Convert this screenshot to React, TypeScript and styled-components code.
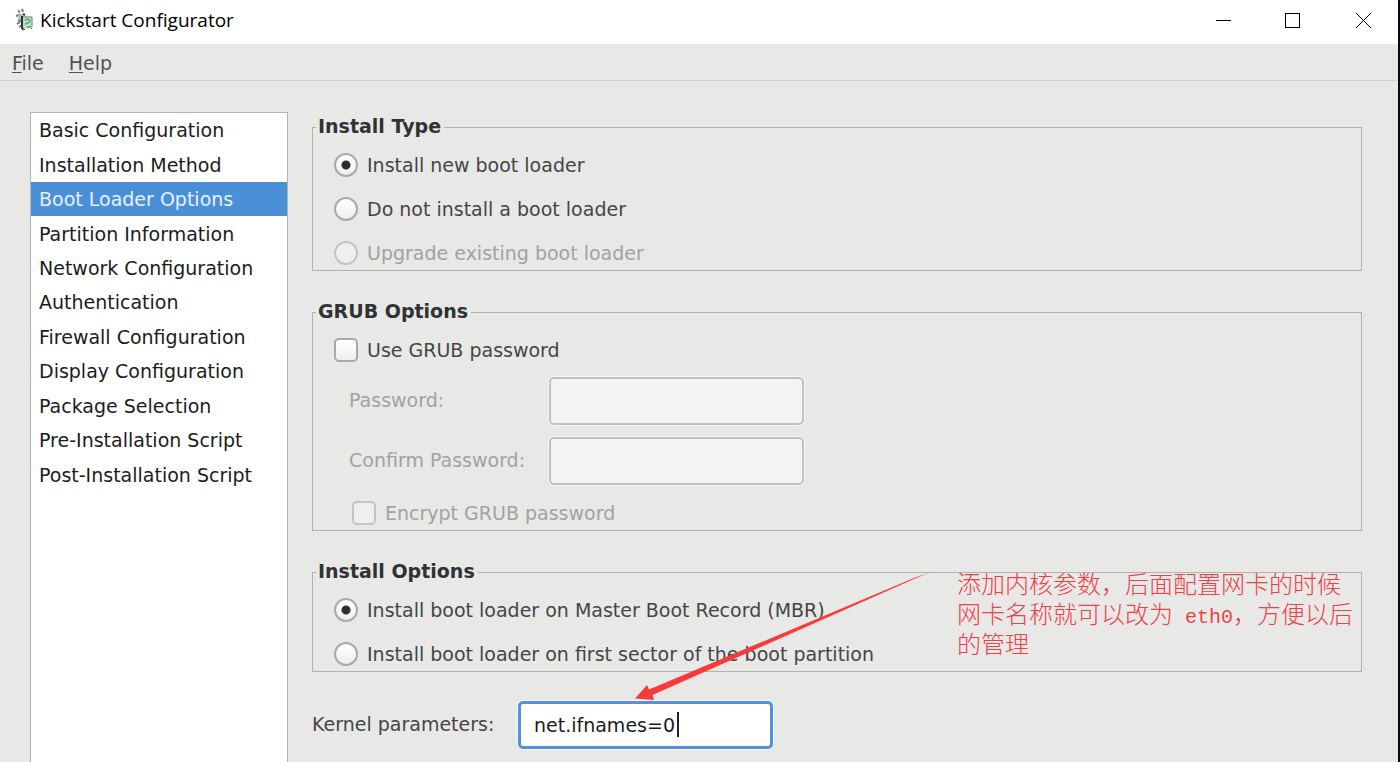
import React from "react";
import styled, { createGlobalStyle } from "styled-components";

const GlobalStyle = createGlobalStyle`
  *, *::before, *::after { box-sizing: border-box; }
  body { margin: 0; background: #e8e8e7; overflow: hidden; }
`;

const sans = `"DejaVu Sans", Verdana, sans-serif`;

const Window = styled.div`
  display: flex;
  flex-direction: column;
  height: 100vh;
  border-right: 2px solid #0d0812;
  background: #e8e8e7;
  color: #444646;
  font: 19px/24px ${sans};
`;

const TitleBar = styled.header`
  display: flex;
  align-items: center;
  flex: none;
  height: 44px;
  padding-left: 14px;
  background: #fff;
`;

const Title = styled.h1`
  flex: 1;
  margin: 0 0 4px 6px;
  color: #000;
  font: 400 19px/24px "Open Sans", "Noto Sans", sans-serif;
`;

const AppIcon = styled.svg`
  width: 20px;
  height: 24px;
  margin-bottom: 4px;
`;

const WindowButton = styled.button`
  display: grid;
  place-items: center;
  width: 70px;
  height: 40px;
  margin-bottom: 4px;
  padding: 0;
  border: 0;
  background: none;
`;

const MenuBar = styled.nav`
  display: flex;
  flex: none;
  gap: 25px;
  height: 37px;
  padding: 7px 12px;
  border-bottom: 1px solid #d0d0d0;
`;

const MenuItem = styled.button`
  padding: 0;
  border: 0;
  background: none;
  color: #4f5151;
  font: inherit;

  u {
    text-decoration-thickness: 1px;
    text-underline-offset: 2px;
  }
`;

const Main = styled.main`
  display: flex;
  flex: 1;
  gap: 24px;
  min-height: 0;
  padding: 31px 36px 0 30px;
`;

const Sidebar = styled.aside`
  flex: none;
  width: 258px;
  border: solid #b4b4b4;
  border-width: 1px 1px 0;
  background: #fff;
`;

const SectionList = styled.ul`
  display: grid;
  grid-auto-rows: 1fr;
  height: 379px;
  margin: 0;
  padding: 0;
  list-style: none;
`;

const SectionLink = styled.a<{ $active: boolean }>`
  display: flex;
  align-items: center;
  height: 100%;
  padding-left: 8px;
  background: ${(p) => (p.$active ? "#4a90d9" : "transparent")};
  color: ${(p) => (p.$active ? "#e6f1fc" : "#1c1c1c")};
  text-decoration: none;
  white-space: nowrap;
`;

const Content = styled.form`
  display: flex;
  flex: 1;
  flex-direction: column;
  gap: 29px;
  min-width: 0;
  padding-top: 3px;
`;

const Annotated = styled.div`
  position: relative;
`;

const Group = styled.fieldset`
  min-width: 0;
  margin: 0;
  padding: 14px 0 5px 21px;
  border: 1px solid #b1b2b1;
`;

const GroupTitle = styled.legend`
  margin-left: -18px;
  padding: 0 3px 2px 2px;
  color: #2f3333;
  font-weight: 700;
  line-height: 22px;
`;

const Stack = styled.div`
  display: flex;
  flex-direction: column;
  gap: 20px;
`;

const Choice = styled.label<{ $disabled?: boolean; $indented?: boolean }>`
  display: flex;
  align-items: center;
  gap: 9px;
  margin-left: ${(p) => (p.$indented ? 18 : 0)}px;
  color: ${(p) => (p.$disabled ? "#a1a2a1" : "inherit")};
  white-space: nowrap;
`;

const Tick = styled.input`
  flex: none;
  width: 24px;
  height: 24px;
  margin: 0;
  appearance: none;
  border: 2px solid #a9aaa8;
  border-radius: ${(p) => (p.type === "radio" ? "50%" : "5px")};
  background: linear-gradient(#fff, #eeeeed);

  &:checked {
    background: radial-gradient(circle, #2b2e2e 0 4px, transparent 5px),
      linear-gradient(#fff, #eeeeed);
  }

  &:disabled {
    border-color: #c3c4c3;
    background: #efefee;
  }
`;

const PasswordGrid = styled.div`
  display: grid;
  grid-template-columns: 200px 255px;
  align-items: center;
  row-gap: 12px;
  padding: 15px 0 16px 15px;
`;

const PasswordLabel = styled.label`
  padding-bottom: 2px;
  color: #a1a2a1;
`;

const TextBox = styled.input`
  width: 100%;
  height: 48px;
  padding: 0 13px;
  border: 2px solid #c0c1c0;
  border-radius: 5px;
  outline: 0;
  background: #f3f3f3;
  box-shadow: 0 0 0 1px #f6f6f6;
  color: #1c1c1c;
  font: inherit;
`;

const KernelRow = styled.div`
  display: grid;
  grid-template-columns: 206px 255px;
  align-items: center;
`;

const KernelLabel = styled.label`
  padding-bottom: 2px;
`;

const KernelField = styled.div`
  position: relative;
`;

const KernelBox = styled(TextBox)`
  border: 3px solid #5391d9;
  background: #fff;
  caret-color: transparent;
`;

const Caret = styled.span`
  position: absolute;
  top: 11px;
  left: 159px;
  width: 2px;
  height: 25px;
  background: #222;
`;

const Arrow = styled.svg`
  position: absolute;
  top: 10px;
  left: 320px;
  width: 304px;
  height: 134px;
  pointer-events: none;
`;

const Note = styled.p`
  position: absolute;
  top: 8px;
  left: 645px;
  margin: 0;
  color: #ee4047;
  font: 300 24px/30px "Noto Sans CJK SC", sans-serif;
  white-space: nowrap;
`;

const NoteLatin = styled.span`
  font: 20px/20px "Liberation Mono", monospace;
`;

const sections = [
  "Basic Configuration",
  "Installation Method",
  "Boot Loader Options",
  "Partition Information",
  "Network Configuration",
  "Authentication",
  "Firewall Configuration",
  "Display Configuration",
  "Package Selection",
  "Pre-Installation Script",
  "Post-Installation Script",
];

export default function App() {
  return (
    <>
      <GlobalStyle />
      <Window>
        <TitleBar>
          <AppIcon viewBox="0 0 20 24" aria-hidden="true">
            <path d="M4 3l2 1M8 1l1 3M2 8l3-1M4 12l3 1M3 16l3-2M5 19l3-2M8 22l2-1" stroke="#777" strokeWidth="2" />
            <path d="M5 5l3 1 2 3-2 4-4-3z" fill="#b4b9b5" />
            <path d="M8 8l10 1v11l-10 1z" fill="#c3dcc7" />
            <path d="M8 8v13M9 6l2 1" stroke="#2c3830" strokeWidth="2" fill="none" />
            <path d="M9 9h9M18 9v10" stroke="#6b8271" strokeWidth="1" fill="none" />
            <path d="M11 12l3-1 2 2-2 2-3 1M13 19h4" stroke="#58a571" strokeWidth="1.500" fill="none" />
            <path d="M9 20l2 2M17 20l1 1" stroke="#48564b" strokeWidth="1" />
          </AppIcon>
          <Title>Kickstart Configurator</Title>
          <WindowButton type="button" aria-label="Minimize">
            <svg width="15" height="15" stroke="#000" shapeRendering="crispEdges">
              <path d="M0 7.500h15" />
            </svg>
          </WindowButton>
          <WindowButton type="button" aria-label="Maximize">
            <svg width="16" height="15" stroke="#000" fill="none" shapeRendering="crispEdges">
              <path d="M.5 .5h14v14h-14z" />
            </svg>
          </WindowButton>
          <WindowButton type="button" aria-label="Close">
            <svg width="15" height="15" stroke="#000">
              <path d="M0 0l15 15M15 0l-15 15" />
            </svg>
          </WindowButton>
        </TitleBar>
        <MenuBar>
          <MenuItem type="button"><u>F</u>ile</MenuItem>
          <MenuItem type="button"><u>H</u>elp</MenuItem>
        </MenuBar>
        <Main>
          <Sidebar>
            <SectionList>
              {sections.map((name) => (
                <li key={name}>
                  <SectionLink href="#" $active={name === "Boot Loader Options"}>{name}</SectionLink>
                </li>
              ))}
            </SectionList>
          </Sidebar>
          <Content>
            <Group>
              <GroupTitle>Install Type</GroupTitle>
              <Stack>
                <Choice><Tick type="radio" name="type" defaultChecked />Install new boot loader</Choice>
                <Choice><Tick type="radio" name="type" />Do not install a boot loader</Choice>
                <Choice $disabled><Tick type="radio" name="type" disabled />Upgrade existing boot loader</Choice>
              </Stack>
            </Group>
            <Group>
              <GroupTitle>GRUB Options</GroupTitle>
              <Choice><Tick type="checkbox" />Use GRUB password</Choice>
              <PasswordGrid>
                <PasswordLabel htmlFor="password">Password:</PasswordLabel>
                <TextBox id="password" type="password" disabled />
                <PasswordLabel htmlFor="confirm">Confirm Password:</PasswordLabel>
                <TextBox id="confirm" type="password" disabled />
              </PasswordGrid>
              <Choice $disabled $indented><Tick type="checkbox" disabled />Encrypt GRUB password</Choice>
            </Group>
            <Annotated>
              <Group>
                <GroupTitle>Install Options</GroupTitle>
                <Stack>
                  <Choice><Tick type="radio" name="target" defaultChecked />Install boot loader on Master Boot Record (MBR)</Choice>
                  <Choice><Tick type="radio" name="target" />Install boot loader on first sector of the boot partition</Choice>
                </Stack>
              </Group>
              <Arrow viewBox="632 571 304 134" aria-hidden="true">
                <path d="M635 699.500L647 686l2 4.500L914 579l17-6-17 7L652.500 696l1.500 5z" fill="#f93a3a" />
              </Arrow>
              <Note>
                添加内核参数，后面配置网卡的时候<br />
                网卡名称就可以改为<NoteLatin> eth0</NoteLatin>，方便以后<br />
                的管理
              </Note>
            </Annotated>
            <KernelRow>
              <KernelLabel htmlFor="kernel">Kernel parameters:</KernelLabel>
              <KernelField>
                <KernelBox id="kernel" type="text" defaultValue="net.ifnames=0" />
                <Caret />
              </KernelField>
            </KernelRow>
          </Content>
        </Main>
      </Window>
    </>
  );
}
